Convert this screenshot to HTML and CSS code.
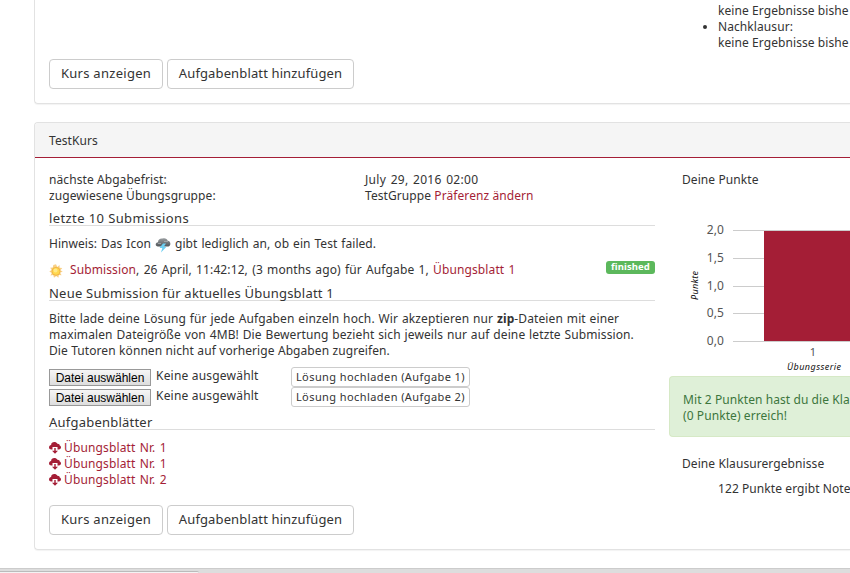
FILE: index.html
```html
<!DOCTYPE html>
<html lang="de">
<head>
<meta charset="utf-8">
<title>TestKurs</title>
<link rel="stylesheet" href="styles.css">
</head>
<body>
<svg class="defs" width="0" height="0">
  <symbol id="cloud" viewBox="0 0 12 13">
    <path d="M3 8.500H2.400C1 8.500 0 7.500 0 6.200S1 4 2.100 3.900C2.200 1.900 3.500 1 5.200 1c1.500 0 2.600.6 3.200 1.800C10 2.700 10.700 3.600 10.700 4.400c.8.3 1.300 1 1.300 1.900 0 1.300-.9 2.200-2.200 2.200H8.500V6h-5v2.500z" fill="currentColor"/>
    <path d="M5.300 7h1.400v2.700H9L6 12.700 3 9.700h2.300z" fill="currentColor"/>
  </symbol>
</svg>
<main class="courses">
  <section class="panel panel-first">
    <ul class="exam-list">
      <li class="plain">keine Ergebnisse bishe</li>
      <li>Nachklausur:<br>keine Ergebnisse bishe</li>
    </ul>
    <div class="actions"><a class="btn">Kurs anzeigen</a><a class="btn wide">Aufgabenblatt hinzufügen</a></div>
  </section>
  <section class="panel panel-course">
    <header class="panel-heading">TestKurs</header>
    <div class="panel-body">
      <div class="left">
        <dl class="facts">
          <dt>nächste Abgabefrist:</dt><dd class="date">July 29, 2016 02:00</dd>
          <dt>zugewiesene Übungsgruppe:</dt><dd>TestGruppe <a>Präferenz ändern</a></dd>
        </dl>
        <h4 class="h-first">letzte 10 Submissions</h4>
        <p class="hint">Hinweis: Das Icon <svg class="storm" viewBox="0 0 16 16">
          <defs><linearGradient id="g" x2="0" y2="1"><stop stop-color="#9a9ea1"/><stop offset="1" stop-color="#505559"/></linearGradient></defs>
          <path d="M3 9.500C-.2 9.500.1 5.500 3 5.200 3 2.500 5.300 1.200 7.300 1.600 9.700.5 12.200 1.500 12.700 3.800 16.300 4.200 16 9.200 13.300 9.500z" fill="url(#g)"/>
          <path d="M3 6.500h3M9 4.500h4" stroke="#aaafb2" stroke-width=".8"/>
          <path d="M8 6.500 4.500 11h2.800L6 15.500 11.500 9.800H8.800L11 6.500z" fill="#6dcff2"/>
        </svg> gibt lediglich an, ob ein Test failed.</p>
        <div class="submission">
          <svg class="sun" viewBox="0 0 14 14"><path d="M7 .3 8.300 3 10.500 1.100 10.700 3.700 13.300 4 11.400 6.200 13.700 7.500 11.200 8.800 12.600 11.200 9.900 11.100 9.400 13.700 7.200 12 5 13.700 4.200 11.100 1.500 11.400 2.700 8.900.3 7.500 2.600 6.100 1.200 3.700 3.800 3.500 4.300 1z" fill="#f8d087"/><circle cx="7" cy="7.300" r="4" fill="#ffd84f" stroke="#eda93c" stroke-width=".7"/><circle cx="6.500" cy="6.500" r="2" fill="#ffe98a"/></svg>
          <span class="sub-text"><a>Submission</a>, 26 April, 11:42:12, (3 months ago) für Aufgabe 1, <a>Übungsblatt 1</a></span>
          <span class="label">finished</span>
        </div>
        <h4 class="h-new">Neue Submission für aktuelles Übungsblatt 1</h4>
        <p class="explain">Bitte lade deine Lösung für jede Aufgaben einzeln hoch. Wir akzeptieren nur <b>zip</b>-Dateien mit einer<br>maximalen Dateigröße von 4MB! Die Bewertung bezieht sich jeweils nur auf deine letzte Submission.<br><span class="closing">Die Tutoren können nicht auf vorherige Abgaben zugreifen.</span></p>
        <div class="upload"><span class="file">Datei auswählen</span><span class="none">Keine ausgewählt</span><span class="btn-xs">Lösung hochladen (Aufgabe 1)</span></div>
        <div class="upload"><span class="file">Datei auswählen</span><span class="none">Keine ausgewählt</span><span class="btn-xs">Lösung hochladen (Aufgabe 2)</span></div>
        <h4 class="h-sheets">Aufgabenblätter</h4>
        <ul class="sheets">
          <li><svg><use href="#cloud"/></svg><a>Übungsblatt Nr. 1</a></li>
          <li><svg><use href="#cloud"/></svg><a>Übungsblatt Nr. 1</a></li>
          <li><svg><use href="#cloud"/></svg><a>Übungsblatt Nr. 2</a></li>
        </ul>
        <div class="actions"><a class="btn">Kurs anzeigen</a><a class="btn wide">Aufgabenblatt hinzufügen</a></div>
      </div>
      <aside class="right">
        <div class="title">Deine Punkte</div>
        <svg class="chart" width="181" height="188">
          <g stroke="#ccc" shape-rendering="crispEdges"><path d="M64 42.500H181M64 70.500H181M64 98.500H181M64 125.500H181M64 153.500H181"/></g>
          <rect x="95" y="43" width="86" height="110" fill="#a41e36"/>
          <g class="ticks"><text x="55" y="46">2,0</text><text x="55" y="74">1,5</text><text x="55" y="102">1,0</text><text x="55" y="129">0,5</text><text x="55" y="157">0,0</text><text class="cat" x="144" y="168">1</text></g>
          <text class="axis" x="118" y="182" textLength="54">Übungsserie</text>
          <text class="axis" transform="translate(29 112) rotate(-90)" textLength="29">Punkte</text>
        </svg>
        <div class="alert">Mit 2 Punkten hast du die Kla<br>(0 Punkte) erreich!</div>
        <div class="title exam-title">Deine Klausurergebnisse</div>
        <div class="grade">122 Punkte ergibt Note</div>
      </aside>
    </div>
  </section>
</main>
<footer class="bar"><div class="status"></div></footer>
</body>
</html>
```
FILE: styles.css
```css
* { box-sizing: border-box; }
body { margin: 0; height: 573px; overflow: hidden; background: #fff; color: #333; font: 12px/16px "Noto Sans", "DejaVu Sans", sans-serif; letter-spacing: .08px; white-space: nowrap; }
h4, p, ul, dl, dd { margin: 0; padding: 0; }
.defs { display: block; height: 0; }
a { color: #a41e36; }
.courses { width: 816px; margin-left: 34px; height: 568px; overflow: hidden; }
.panel { border: 1px solid #e2e2e2; border-right: 0; border-radius: 4px 0 0 4px; box-shadow: 0 1px 1px rgba(0,0,0,.05); }
.panel-first { height: 104px; border-top: 0; border-radius: 0 0 0 4px; padding: 3px 0 0 14px; }
.exam-list { margin-left: 669px; height: 56px; }
.exam-list .plain { list-style: none; }
.actions { display: flex; gap: 4px; }
.btn { width: 114px; height: 30px; border: 1px solid #ccc; border-radius: 4px; color: #333; font-size: 13px; line-height: 27px; text-align: center; letter-spacing: .28px; }
.btn.wide { width: 187px; letter-spacing: .13px; }
.panel-course { margin-top: 18px; height: 428px; }
.panel-heading { height: 35px; background: #f5f5f5; border-bottom: 1px solid #a41e36; padding: 10px 14px; border-radius: 3px 0 0 0; }
.panel-body { display: flex; padding: 14px 0 0 14px; }
.left { flex: none; width: 606px; }
.facts { display: grid; grid-template-columns: 316px 1fr; }
.date { letter-spacing: .32px; word-spacing: 1px; }
h4 { font-weight: 400; font-size: 13px; line-height: 14px; height: 15px; border-bottom: 1px solid #ddd; letter-spacing: .22px; }
.h-first { margin-top: 7px; letter-spacing: .4px; }
.hint { margin-top: 10px; height: 16px; word-spacing: .9px; letter-spacing: .03px; }
.storm { width: 16px; height: 16px; vertical-align: -5px; }
.submission { display: flex; margin-top: 10px; height: 16px; }
.sub-text { word-spacing: 1px; letter-spacing: .11px; }
.sun { width: 14px; height: 14px; margin: 2px 7px 0 0; }
.label { margin-left: auto; margin-top: -1px; width: 49px; height: 13px; border-radius: 3px; background: #5cb85c; color: #fff; font-weight: 700; font-size: 9.5px; line-height: 12px; text-align: center; }
.h-new { margin-top: 8px; }
.explain { margin: 10px 0 8px; height: 48px; word-spacing: .6px; letter-spacing: .11px; }
.closing { word-spacing: .2px; letter-spacing: .07px; }
.upload { display: flex; height: 20px; }
.file { width: 102px; height: 17px; margin-top: 2px; border: 1px solid #999; background: linear-gradient(#f6f6f6, #ddd); color: #000; font: 12px/16px "Liberation Sans", sans-serif; letter-spacing: 0; text-align: center; }
.none { width: 135px; margin: 1px 0 0 5px; letter-spacing: .2px; }
.btn-xs { width: 179px; height: 20px; border: 1px solid #ccc; border-radius: 3px; font-size: 11px; line-height: 18px; text-align: center; letter-spacing: .42px; }
.h-sheets { margin-top: 8px; }
.sheets { list-style: none; margin: 10px 0 17px; word-spacing: 1px; letter-spacing: .13px; }
.sheets li { display: flex; height: 16px; }
.sheets svg { width: 12px; height: 13px; margin: 1px 3px 0 0; color: #a41e36; }
.right { flex: none; margin-left: 14px; width: 181px; }
.title { margin-left: 13px; }
.chart { display: block; }
.ticks { fill: #555; font-size: 12px; text-anchor: end; }
.ticks .cat { text-anchor: middle; font-size: 11px; }
.axis { fill: #111; font-size: 9px; font-style: italic; letter-spacing: 0; }
.alert { height: 61px; border: 1px solid #d6e9c6; border-right: 0; border-radius: 4px 0 0 4px; background: #dff0d8; color: #3c763d; padding: 15px 0 0 13px; }
.exam-title { margin-top: 19px; }
.grade { margin: 9px 0 0 49px; }
.bar { height: 5px; background: #ddd; border-top: 1px solid #ccc; padding-top: 2px; }
.status { width: 199px; height: 2px; background: #f3f3f3; border-top: 1px solid #bbb; border-radius: 0 2px 0 0; }
```
